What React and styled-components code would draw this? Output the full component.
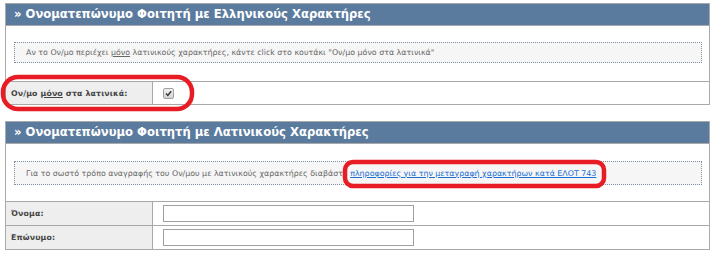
import React from "react";
import styled, { createGlobalStyle } from "styled-components";

const Global = createGlobalStyle`
  html, body { margin: 0; padding: 0; background: #fff; }
  body { font-family: "DejaVu Sans", Verdana, sans-serif; }
`;

const Page = styled.div`
  position: relative;
  width: 720px;
  height: 260px;
  padding: 3px 0 0 5px;
  box-sizing: border-box;
  display: flex;
  flex-direction: column;
  gap: 16px;
`;

const Panel = styled.section`
  width: 705px;
  box-sizing: border-box;
  border: 1px solid #a9a9a9;
  background: #fff;
`;

const Header = styled.h2`
  margin: 0;
  height: 21px;
  line-height: 21px;
  background: #5b7b9e;
  color: #fff;
  font-size: 11.6px;
  font-weight: bold;
  padding-left: 8px;
  border-bottom: 1px solid #a9a9a9;
  white-space: nowrap;
`;

const InfoWrap = styled.div`
  padding: ${(p) => p.$pad};
`;

const InfoBox = styled.div`
  border: 1px dotted #7f8ea0;
  background: #f6f6f6;
  color: #666;
  font-size: 7.9px;
  height: ${(p) => p.$h}px;
  display: flex;
  align-items: center;
  padding-left: 11px;
  white-space: nowrap;
`;

const Link = styled.a`
  color: #1a6fd4;
  text-decoration: underline;
  margin-left: 3px;
`;

const Row = styled.div`
  display: flex;
  height: ${(p) => p.$h}px;
  border-top: 1px solid #a9a9a9;
`;

const Label = styled.div`
  width: 147px;
  box-sizing: border-box;
  background: #eeeeee;
  border-right: 1px solid #a9a9a9;
  color: #444;
  font-weight: bold;
  font-size: 7.8px;
  letter-spacing: 0.15px;
  display: flex;
  align-items: center;
  padding-left: 5px;
  white-space: nowrap;
`;

const U = styled.span`
  text-decoration: underline;
`;

const Value = styled.div`
  flex: 1;
  display: flex;
  align-items: center;
  padding-left: ${(p) => p.$pl}px;
`;

const Check = styled.span`
  width: 9px;
  height: 9px;
  border: 1px solid #a0a0a0;
  border-radius: 2px;
  background: linear-gradient(#f0f0f0, #d4d4d4);
  display: flex;
  align-items: center;
  justify-content: center;
`;

const TextInput = styled.input`
  width: 251px;
  height: 17px;
  box-sizing: border-box;
  border: 1px solid #a0a0a0;
  margin: 0;
  padding: 0 2px;
  background: #fff;
  outline: none;
`;

const Mark = styled.svg`
  position: absolute;
  pointer-events: none;
  overflow: visible;
`;

export default function App() {
  return (
    <>
      <Global />
      <Page>
        <Panel>
          <Header>» Ονοματεπώνυμο Φοιτητή με Ελληνικούς Χαρακτήρες</Header>
          <InfoWrap $pad="16px 7px 18px 8px">
            <InfoBox $h={19}>
              Αν το Ον/μο περιέχει&nbsp;<U>μόνο</U>&nbsp;λατινικούς χαρακτήρες, κάντε click στο κουτάκι "Ον/μο μόνο στα λατινικά"
            </InfoBox>
          </InfoWrap>
          <Row $h={22}>
            <Label>
              Ον/μο&nbsp;<U>μόνο</U>&nbsp;στα λατινικά:
            </Label>
            <Value $pl={10}>
              <Check>
                <svg width="7" height="7" viewBox="0 0 7 7">
                  <path d="M1 3.6 L2.8 5.4 L6.2 1.2" fill="none" stroke="#333" strokeWidth="1.4" />
                </svg>
              </Check>
            </Value>
          </Row>
        </Panel>
        <Panel>
          <Header>» Ονοματεπώνυμο Φοιτητή με Λατινικούς Χαρακτήρες</Header>
          <InfoWrap $pad="17px 7px 16px 8px">
            <InfoBox $h={22}>
              Για το σωστό τρόπο αναγραφής του Ον/μου με λατινικούς χαρακτήρες διαβάστε
              <Link href="#">πληροφορίες για την μεταγραφή χαρακτήρων κατά ΕΛΟΤ 743</Link>
            </InfoBox>
          </InfoWrap>
          <Row $h={23}>
            <Label>Όνομα:</Label>
            <Value $pl={10}>
              <TextInput />
            </Value>
          </Row>
          <Row $h={23}>
            <Label>Επώνυμο:</Label>
            <Value $pl={10}>
              <TextInput />
            </Value>
          </Row>
        </Panel>
        <Mark style={{ left: 0, top: 74 }} width="196" height="38">
          <rect x="3" y="3" width="189" height="32" rx="15" ry="15" fill="none" stroke="#e81c24" strokeWidth="4.5" />
        </Mark>
        <Mark style={{ left: 340, top: 159 }} width="268" height="30">
          <rect x="5" y="3" width="259" height="24" rx="8" ry="8" fill="none" stroke="#e81c24" strokeWidth="4.5" />
        </Mark>
      </Page>
    </>
  );
}
